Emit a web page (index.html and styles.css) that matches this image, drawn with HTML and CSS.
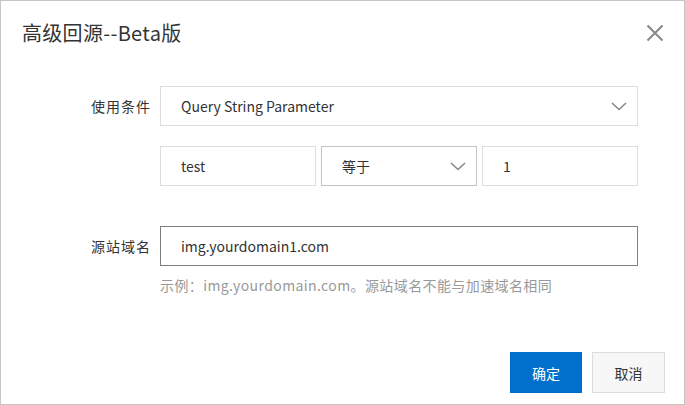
FILE: index.html
```html
<!DOCTYPE html>
<html>
  <head>
    <meta charset="utf-8" />
    <title>高级回源</title>
    <link rel="stylesheet" href="styles.css">
  </head>
  <body>
    <div class="dialog">
      <div class="dialog-header">
        <h2 class="dialog-title">高级回源--Beta版</h2>
        <span class="close">
          <svg width="18" height="18" viewBox="0 0 18 18">
            <path d="M1.5 1.5 L16.5 16.5 M16.5 1.5 L1.5 16.5" stroke="#888" stroke-width="2" fill="none" />
          </svg>
        </span>
      </div>

      <div class="dialog-body">
        <div class="form-row">
          <label class="form-label">使用条件</label>
          <div class="form-control">
            <div class="select w-full">
              <span>Query String Parameter</span>
              <svg class="chevron" width="16" height="9" viewBox="0 0 16 9">
                <path d="M1 1 L8 7.5 L15 1" stroke="#888" stroke-width="1.6" fill="none" />
              </svg>
            </div>
          </div>
        </div>

        <div class="form-row">
          <label class="form-label"></label>
          <div class="form-control triple">
            <div class="input">test</div>
            <div class="select select-dark">
              <span>等于</span>
              <svg class="chevron" width="16" height="9" viewBox="0 0 16 9">
                <path d="M1 1 L8 7.5 L15 1" stroke="#888" stroke-width="1.6" fill="none" />
              </svg>
            </div>
            <div class="input">1</div>
          </div>
        </div>

        <div class="form-row row-origin">
          <label class="form-label">源站域名</label>
          <div class="form-control">
            <div class="input input-focus w-full">img.yourdomain1.com</div>
          </div>
        </div>
        <div class="help">示例：img.yourdomain.com。源站域名不能与加速域名相同</div>
      </div>

      <div class="dialog-footer">
        <button class="btn btn-primary">确定</button>
        <button class="btn btn-default">取消</button>
      </div>
    </div>
  </body>
</html>
```

FILE: styles.css
```css
body {
  margin: 0;
  background-color: #ffffff;
  font-family: "Noto Sans CJK SC", "Noto Sans", sans-serif;
  color: #333333;
}
.dialog {
  box-sizing: border-box;
  width: 685px;
  height: 405px;
  border: 1px solid #c6c6c6;
  display: flex;
  flex-direction: column;
}
.dialog-header {
  display: flex;
  justify-content: space-between;
  align-items: center;
  height: 64px;
  padding: 0 20px 0 21px;
}
.dialog-title {
  margin: 0;
  font-size: 20px;
  font-weight: 400;
  line-height: 26px;
  letter-spacing: 0.3px;
  color: #333333;
}
.close {
  display: flex;
  width: 18px;
  height: 18px;
}
.dialog-body {
  flex: 1;
  padding-top: 21px;
}
.form-row {
  display: flex;
  align-items: center;
  margin-bottom: 20px;
}
.row-origin {
  margin-top: 40px;
  margin-bottom: 9px;
}
.form-label {
  width: 150px;
  padding-right: 9px;
  text-align: right;
  font-size: 14px;
  line-height: 20px;
  letter-spacing: 1px;
  color: #333333;
}
.form-control {
  width: 478px;
}
.triple {
  display: flex;
  gap: 5px;
}
.w-full {
  width: 100%;
}
.input,
.select {
  box-sizing: border-box;
  height: 40px;
  width: 156px;
  border: 1px solid #dddddd;
  padding: 0 20px;
  display: flex;
  align-items: center;
  font-size: 14px;
  color: #333333;
}
.select {
  justify-content: space-between;
  padding-right: 10px;
}
.select.w-full,
.input.w-full {
  width: 100%;
}
.select-dark {
  border-color: #c4c4c4;
}
.input-focus {
  border-color: #7f7f7f;
}
.chevron {
  display: block;
}
.help {
  padding-left: 159px;
  font-size: 14px;
  line-height: 20px;
  letter-spacing: 0.4px;
  color: #999999;
}
.dialog-footer {
  display: flex;
  justify-content: flex-end;
  gap: 10px;
  padding: 0 19px 11px 0;
}
.btn {
  box-sizing: border-box;
  width: 72px;
  height: 41px;
  font-family: "Noto Sans CJK SC", sans-serif;
  font-size: 14px;
  border: 1px solid transparent;
  cursor: pointer;
}
.btn-primary {
  background-color: #0070cc;
  border-color: #0070cc;
  color: #ffffff;
}
.btn-default {
  width: 73px;
  background-color: #f7f7f7;
  border-color: #dddddd;
  color: #333333;
}
```
